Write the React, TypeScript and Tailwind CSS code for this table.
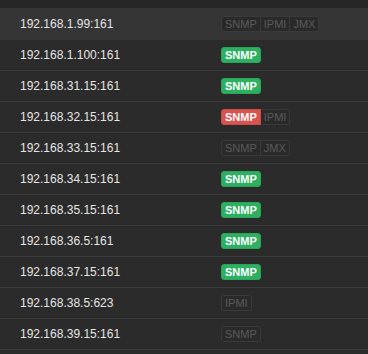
import React from "react";

type Seg = { label: string; state: "ok" | "err" | "off" };
type Row = { ip: string; segs: Seg[]; active?: boolean };

const rows: Row[] = [
  { ip: "192.168.1.99:161", active: true, segs: [{ label: "SNMP", state: "off" }, { label: "IPMI", state: "off" }, { label: "JMX", state: "off" }] },
  { ip: "192.168.1.100:161", segs: [{ label: "SNMP", state: "ok" }] },
  { ip: "192.168.31.15:161", segs: [{ label: "SNMP", state: "ok" }] },
  { ip: "192.168.32.15:161", segs: [{ label: "SNMP", state: "err" }, { label: "IPMI", state: "off" }] },
  { ip: "192.168.33.15:161", segs: [{ label: "SNMP", state: "off" }, { label: "JMX", state: "off" }] },
  { ip: "192.168.34.15:161", segs: [{ label: "SNMP", state: "ok" }] },
  { ip: "192.168.35.15:161", segs: [{ label: "SNMP", state: "ok" }] },
  { ip: "192.168.36.5:161", segs: [{ label: "SNMP", state: "ok" }] },
  { ip: "192.168.37.15:161", segs: [{ label: "SNMP", state: "ok" }] },
  { ip: "192.168.38.5:623", segs: [{ label: "IPMI", state: "off" }] },
  { ip: "192.168.39.15:161", segs: [{ label: "SNMP", state: "off" }] },
];

function Badges({ segs }: { segs: Seg[] }) {
  return (
    <div className="flex h-[16px] items-stretch">
      {segs.map((s, i) => {
        const first = i === 0;
        const last = i === segs.length - 1;
        const round = `${first ? "rounded-l-[3px]" : ""} ${last ? "rounded-r-[3px]" : ""}`;
        if (s.state === "ok") {
          return (
            <span key={i} className={`flex items-center border border-[#28a557] bg-[#2eb062] px-[3px] text-[11px] font-bold leading-none text-white ${round}`}>
              {s.label}
            </span>
          );
        }
        if (s.state === "err") {
          return (
            <span key={i} className={`flex items-center border border-[#cc4a47] bg-[#d9534f] px-[3px] text-[11px] font-bold leading-none text-white ${round}`}>
              {s.label}
            </span>
          );
        }
        return (
          <span
            key={i}
            className={`flex items-center border border-[#3a3a3a] bg-[#2a2a2a] px-[3px] text-[11px] leading-none text-[#5a5a5a] ${!first ? "border-l-0" : ""} ${round}`}
          >
            {s.label}
          </span>
        );
      })}
    </div>
  );
}

export default function App() {
  return (
    <div
      className="h-[354px] w-[368px] overflow-hidden bg-[#2b2b2b]"
      style={{ fontFamily: '"Liberation Sans", Arial, sans-serif' }}
    >
      <div className="h-[8px] bg-[#262626]" />
      {rows.map((r, i) => (
        <div
          key={i}
          className={`flex items-center ${r.active ? "h-[32px] bg-[#353535]" : "h-[31px] border-b border-[#3a3a3a]"}`}
        >
          <div className="w-[221px] shrink-0 pl-[20px] text-[12px] text-[#e6e6e6]">{r.ip}</div>
          <Badges segs={r.segs} />
        </div>
      ))}
    </div>
  );
}
